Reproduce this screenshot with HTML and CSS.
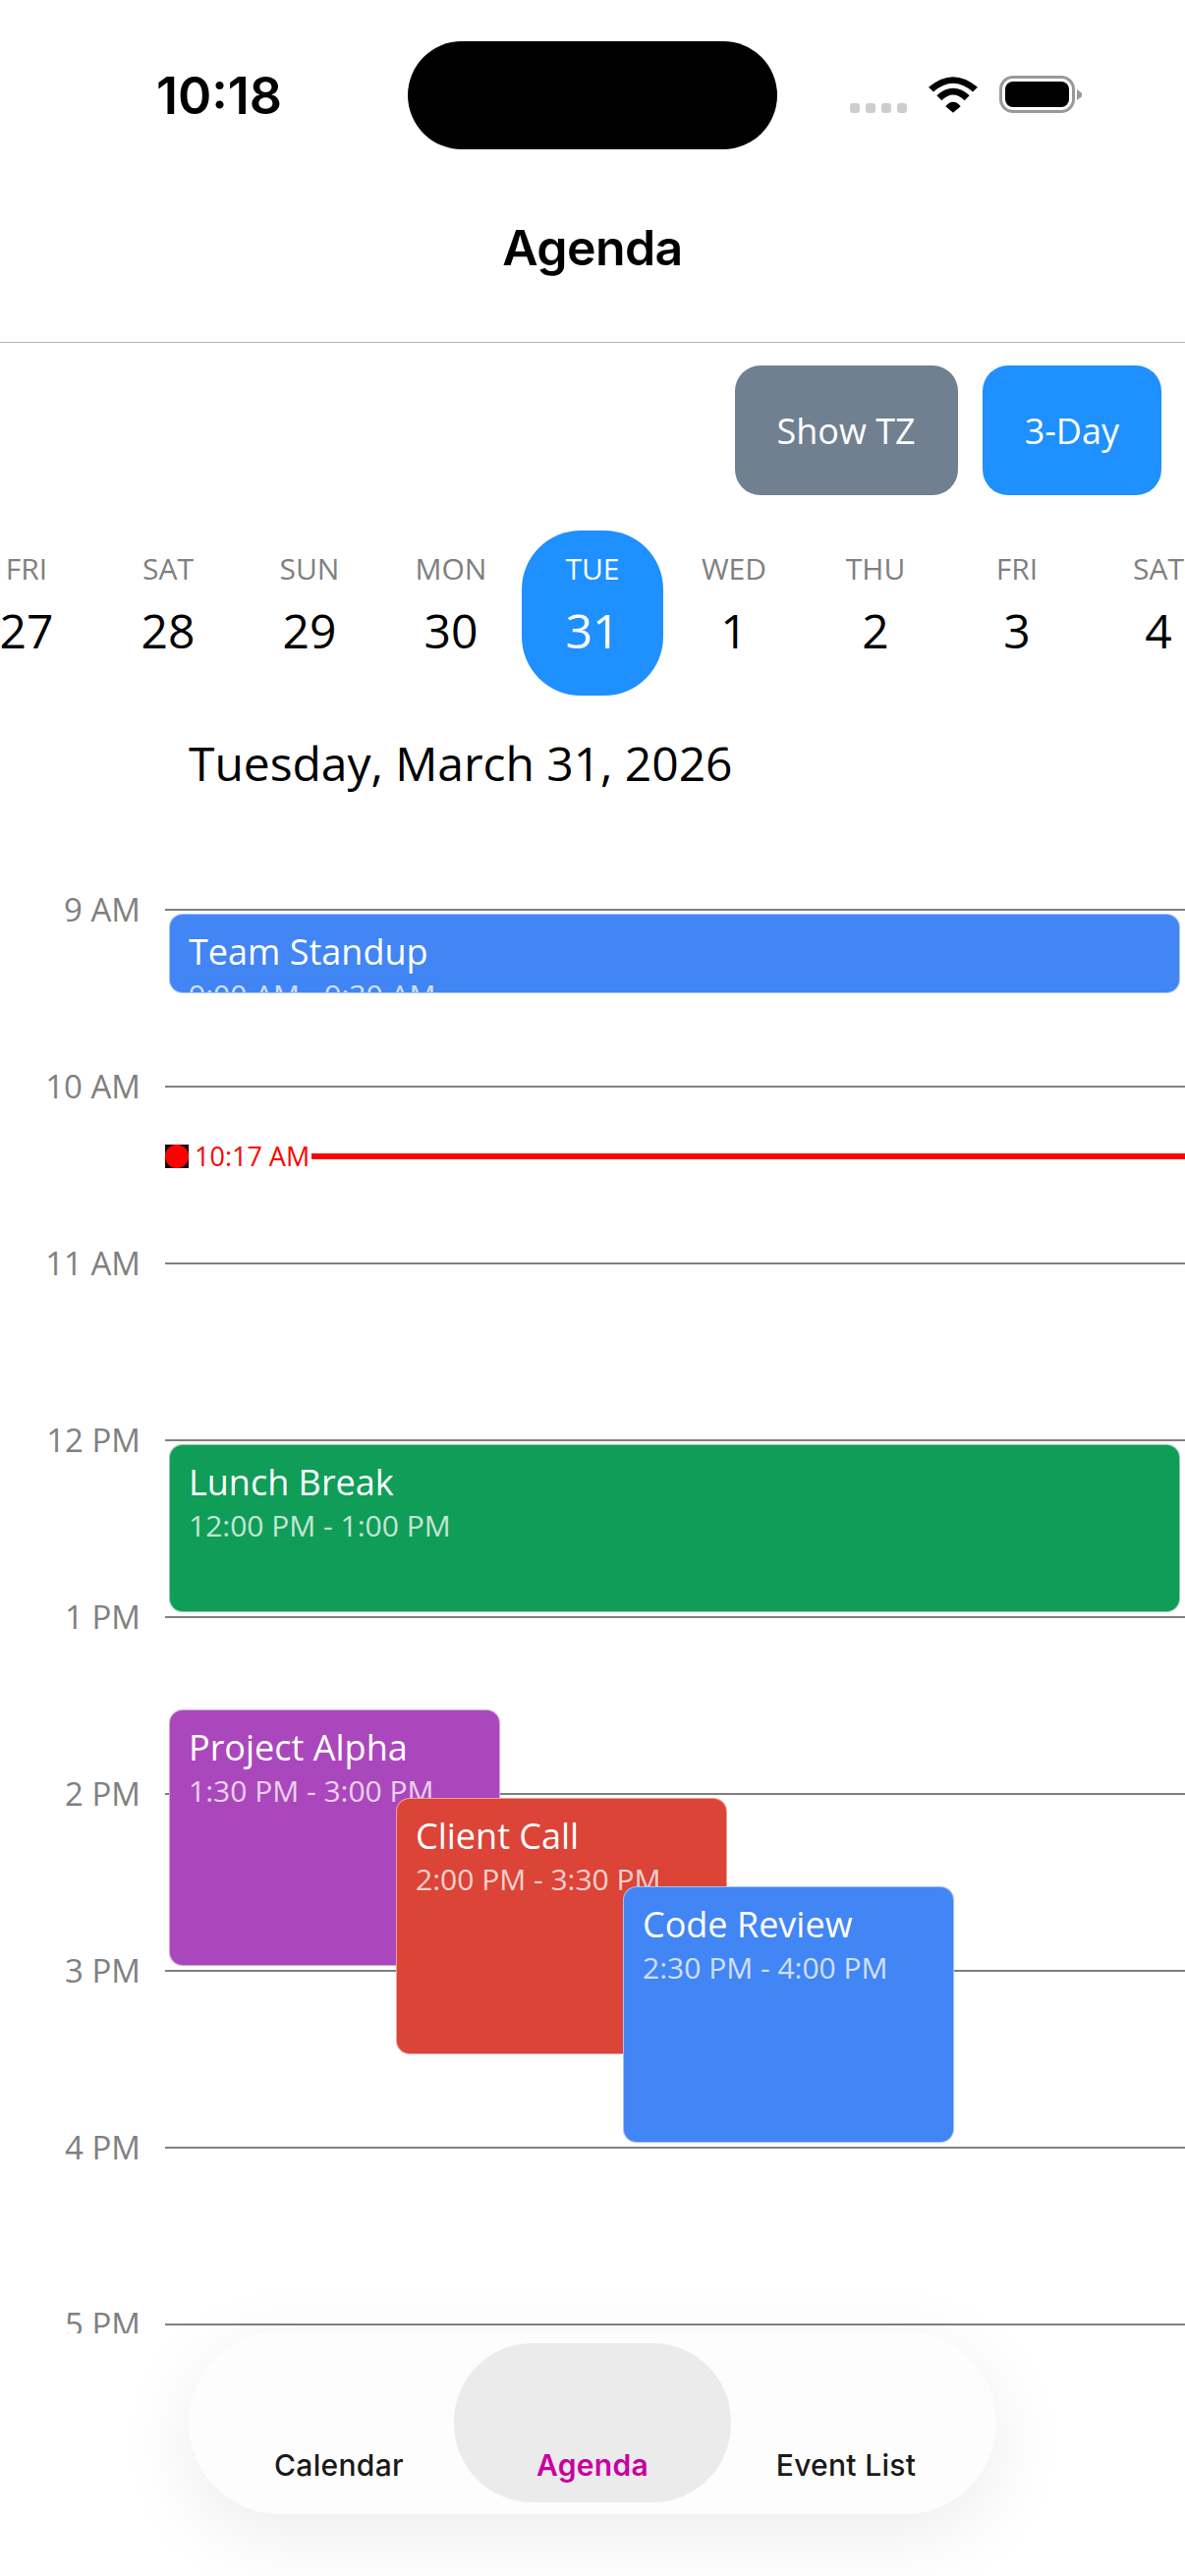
FILE: index.html
```html
<!DOCTYPE html>
<html lang="en">

<head>
	<meta charset="UTF-8">
	<meta name="viewport" content="width=device-width, initial-scale=1.0">
	<title>Agenda</title>
	<link rel="stylesheet" href="styles.css">
</head>

<body>
	<div class="screen">
		<header class="top">
			<div class="status-bar">
				<div class="status-time">10:18</div>
				<div class="island"></div>
				<div class="status-icons">
					<div class="signal"><span></span><span></span><span></span><span></span></div>
					<svg class="wifi" width="50" height="37" viewBox="0 0 150 110">
						<path d="M0 32Q75 -32 150 32L135 46Q75 -6 15 46Z" />
						<path d="M25 57Q75 13 125 57L110 72Q75 38 40 72Z" />
						<path d="M52 90Q75 64 98 90L75 110Z" />
					</svg>
					<div class="battery"><div class="battery-fill"></div></div>
				</div>
			</div>
			<h1 class="title">Agenda</h1>
		</header>

		<div class="toolbar">
			<button class="btn btn-gray">Show TZ</button>
			<button class="btn btn-blue">3-Day</button>
		</div>

		<div class="days">
			<div class="day"><span class="day-name">FRI</span><span class="day-num">27</span></div>
			<div class="day"><span class="day-name">SAT</span><span class="day-num">28</span></div>
			<div class="day"><span class="day-name">SUN</span><span class="day-num">29</span></div>
			<div class="day"><span class="day-name">MON</span><span class="day-num">30</span></div>
			<div class="day selected"><span class="day-name">TUE</span><span class="day-num">31</span></div>
			<div class="day"><span class="day-name">WED</span><span class="day-num">1</span></div>
			<div class="day"><span class="day-name">THU</span><span class="day-num">2</span></div>
			<div class="day"><span class="day-name">FRI</span><span class="day-num">3</span></div>
			<div class="day"><span class="day-name">SAT</span><span class="day-num">4</span></div>
		</div>

		<h2 class="date">Tuesday, March 31, 2026</h2>

		<div class="timeline">
			<div class="hour"><span class="hour-label">9 AM</span><div class="hour-line"></div></div>
			<div class="hour"><span class="hour-label">10 AM</span><div class="hour-line"></div></div>
			<div class="hour"><span class="hour-label">11 AM</span><div class="hour-line"></div></div>
			<div class="hour"><span class="hour-label">12 PM</span><div class="hour-line"></div></div>
			<div class="hour"><span class="hour-label">1 PM</span><div class="hour-line"></div></div>
			<div class="hour"><span class="hour-label">2 PM</span><div class="hour-line"></div></div>
			<div class="hour"><span class="hour-label">3 PM</span><div class="hour-line"></div></div>
			<div class="hour"><span class="hour-label">4 PM</span><div class="hour-line"></div></div>
			<div class="hour"><span class="hour-label">5 PM</span><div class="hour-line"></div></div>

			<div class="now">
				<div class="now-box"><div class="now-dot"></div></div>
				<span class="now-time">10:17 AM</span>
				<div class="now-line"></div>
			</div>

			<div class="event event-standup">
				<div class="event-title">Team Standup</div>
				<div class="event-time">9:00 AM - 9:30 AM</div>
			</div>
			<div class="event event-lunch">
				<div class="event-title">Lunch Break</div>
				<div class="event-time">12:00 PM - 1:00 PM</div>
			</div>
			<div class="event event-alpha">
				<div class="event-title">Project Alpha</div>
				<div class="event-time">1:30 PM - 3:00 PM</div>
			</div>
			<div class="event event-call">
				<div class="event-title">Client Call</div>
				<div class="event-time">2:00 PM - 3:30 PM</div>
			</div>
			<div class="event event-review">
				<div class="event-title">Code Review</div>
				<div class="event-time">2:30 PM - 4:00 PM</div>
			</div>
		</div>

		<nav class="tabbar">
			<div class="tab"><span>Calendar</span></div>
			<div class="tab active"><span>Agenda</span></div>
			<div class="tab"><span>Event List</span></div>
		</nav>
	</div>
</body>

</html>
```

FILE: styles.css
```css
* {
	margin: 0;
	padding: 0;
	box-sizing: border-box;
}

body {
	font-family: 'Open Sans', sans-serif;
	background: white;
}

.screen {
	position: relative;
	width: 1206px;
	height: 2622px;
	overflow: hidden;
	background: white;
}

.top {
	height: 349px;
	border-bottom: 1px solid #b4b4b4;
	font-family: Inter, sans-serif;
}

.status-bar {
	display: flex;
	align-items: flex-start;
	padding-top: 42px;
}

.status-time {
	width: 415px;
	padding: 31px 0 0 159px;
	font-size: 52px;
	line-height: 50px;
	font-weight: 600;
	color: black;
}

.island {
	width: 376px;
	height: 110px;
	border-radius: 55px;
	background: black;
}

.status-icons {
	display: flex;
	align-items: flex-end;
	margin: 36px 0 0 74px;
}

.signal {
	display: flex;
	gap: 6px;
	margin-right: 22px;
}

.signal span {
	width: 10px;
	height: 10px;
	border-radius: 3px;
	background: #cdcdcd;
}

.wifi {
	display: block;
	margin-right: 22px;
}

.wifi path {
	fill: black;
}

.battery {
	position: relative;
	width: 77px;
	height: 38px;
	padding: 3px;
	margin-top: -1px;
	border: 3px solid #999;
	border-radius: 14px;
}

.battery::after {
	content: "";
	position: absolute;
	left: 76px;
	top: 11px;
	width: 5px;
	height: 11px;
	background: #999;
	clip-path: polygon(0 0, 100% 35%, 100% 65%, 0 100%);
}

.battery-fill {
	height: 100%;
	border-radius: 8px;
	background: black;
}

.title {
	margin-top: 70px;
	text-align: center;
	font-size: 50px;
	line-height: 60px;
	font-weight: 600;
	letter-spacing: -0.6px;
	color: black;
}

.toolbar {
	display: flex;
	justify-content: flex-end;
	gap: 25px;
	padding: 23px 24px 0 0;
}

.btn {
	height: 132px;
	padding: 0 43px;
	border: none;
	border-radius: 26px;
	font-family: 'Open Sans', sans-serif;
	font-size: 36px;
	color: white;
}

.btn-gray {
	background: #708090;
}

.btn-blue {
	background: #1e90ff;
}

.days {
	display: flex;
	margin: 36px 0 0 -45px;
}

.day {
	flex: 0 0 144px;
	height: 168px;
	display: flex;
	flex-direction: column;
	align-items: center;
	padding-top: 18px;
	border-radius: 60px;
}

.day.selected {
	background: #1e90ff;
}

.day-name {
	font-size: 30px;
	line-height: 41px;
	color: #808080;
}

.day-num {
	margin-top: 10px;
	font-size: 48px;
	line-height: 65px;
	color: black;
}

.selected .day-name,
.selected .day-num {
	color: white;
}

.date {
	margin: 36px 0 27px 192px;
	font-size: 48px;
	line-height: 65px;
	font-weight: 400;
	letter-spacing: -0.05px;
	color: black;
}

.timeline {
	position: relative;
	height: 1539px;
	overflow: hidden;
}

.hour {
	display: flex;
	align-items: center;
	gap: 25px;
	height: 180px;
}

.hour-label {
	width: 143px;
	margin-bottom: 2px;
	text-align: right;
	font-size: 33px;
	color: #808080;
}

.hour-line {
	flex: 1;
	height: 2px;
	background: #808080;
}

.now {
	position: absolute;
	left: 168px;
	right: 0;
	top: 322px;
	display: flex;
	align-items: center;
}

.now-box {
	width: 24px;
	height: 24px;
	background: #111;
}

.now-dot {
	width: 24px;
	height: 24px;
	border-radius: 50%;
	background: red;
}

.now-time {
	margin: 0 2px 0 6px;
	font-size: 27px;
	color: red;
}

.now-line {
	flex: 1;
	height: 6px;
	background: red;
}

.event {
	position: absolute;
	left: 172px;
	width: 337px;
	padding: 13px 19px 0;
	overflow: hidden;
	border: 1px solid rgba(255, 255, 255, 0.5);
	border-radius: 14px;
	color: white;
}

.event-title {
	font-size: 36px;
	line-height: 49px;
	white-space: nowrap;
}

.event-time {
	font-size: 30px;
	line-height: 40px;
	white-space: nowrap;
	opacity: 0.75;
}

.event-standup {
	top: 94px;
	width: 1029px;
	height: 81px;
	background: #4285f4;
}

.event-lunch {
	top: 634px;
	width: 1029px;
	height: 171px;
	background: #0f9d58;
}

.event-alpha {
	top: 904px;
	height: 261px;
	background: #ab47bc;
}

.event-call {
	top: 994px;
	left: 403px;
	height: 261px;
	background: #db4437;
}

.event-review {
	top: 1084px;
	left: 634px;
	height: 261px;
	background: #4285f4;
}

.tabbar {
	position: absolute;
	left: 192px;
	top: 2373px;
	width: 822px;
	height: 186px;
	display: flex;
	padding: 0 24px;
	border-radius: 93px;
	background: #fdfdfd;
	box-shadow: 0 20px 80px rgba(0, 0, 0, 0.08);
	font-family: Inter, sans-serif;
}

.tab {
	position: relative;
	flex: 1;
	display: flex;
	align-items: flex-end;
	justify-content: center;
	padding-bottom: 32px;
	font-size: 30px;
	line-height: 36px;
	font-weight: 500;
	letter-spacing: 0.3px;
	color: #1a1a1a;
}

.tab.active {
	color: #c800a1;
	font-weight: 600;
}

.tab.active::before {
	content: "";
	position: absolute;
	left: -12px;
	right: -12px;
	top: 12px;
	bottom: 12px;
	border-radius: 80px;
	background: #ebebeb;
}

.tab span {
	position: relative;
}
```
